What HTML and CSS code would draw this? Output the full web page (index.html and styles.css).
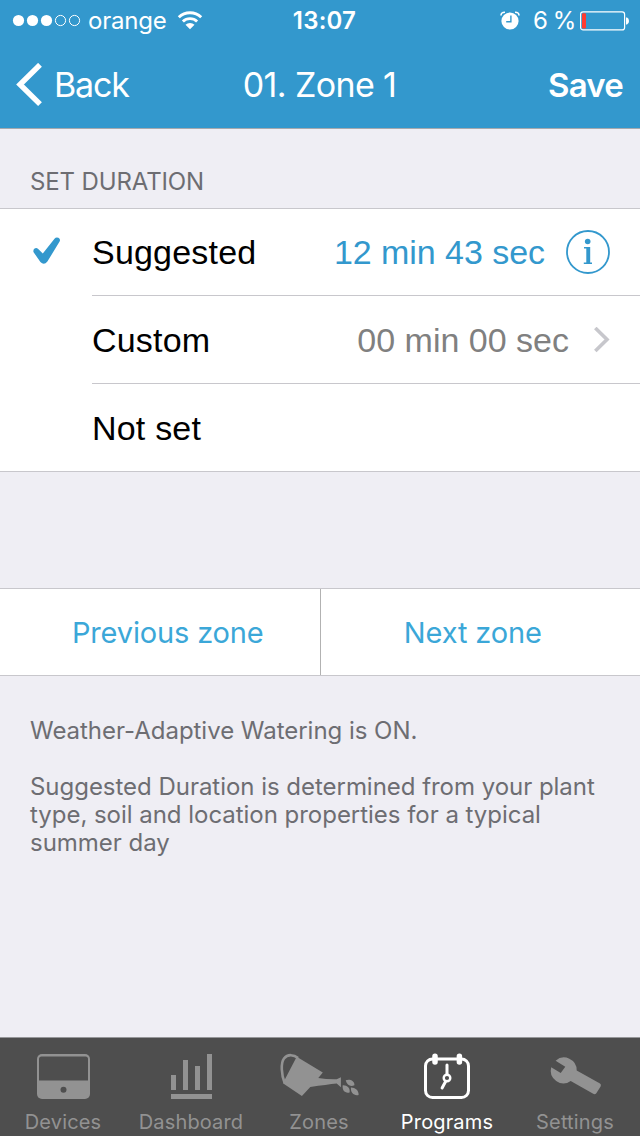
FILE: index.html
```html
<!DOCTYPE html>
<html lang="en">
<head>
<meta charset="utf-8">
<title>Zone duration</title>
<link rel="stylesheet" href="styles.css">
</head>
<body>
<div class="screen">
  <header class="header">
    <div class="status">
      <div class="status-left">
        <svg class="signal" width="70" height="14" viewBox="0 0 70 14"><g fill="#fff"><circle cx="6.500" cy="6.500" r="5.600"/><circle cx="20.500" cy="6.500" r="5.600"/><circle cx="34.500" cy="6.500" r="5.600"/></g><g fill="none" stroke="#fff" stroke-width="1"><circle cx="48.500" cy="6.500" r="5.100"/><circle cx="62.500" cy="6.500" r="5.100"/></g></svg>
        <span class="carrier">orange</span>
        <svg class="wifi" width="26" height="20" viewBox="0 0 26 20"><g fill="none" stroke="#fff" stroke-width="2.900"><path d="M1.800 6.300A16 16 0 0 1 24.200 6.300"/><path d="M5.900 10.500A10.300 10.300 0 0 1 20.100 10.500"/></g><path fill="#fff" d="M8.500 13.700A6.500 6.500 0 0 1 17.500 13.700L13 18.300Z"/></svg>
      </div>
      <div class="clock">13:07</div>
      <div class="status-right">
        <svg class="alarm" width="20" height="20" viewBox="0 0 20 20"><circle cx="10" cy="10" r="8.600" fill="#fff"/><path d="M1 4.600Q1 1.100 5 1.200M19 4.600Q19 1.100 15 1.200" fill="none" stroke="#fff" stroke-width="1.600"/><path d="M10.900 4.600v6.100H6.200" fill="none" stroke="#3398cd" stroke-width="1.400"/></svg>
        <span class="percent">6 %</span>
        <svg class="battery" width="50" height="20" viewBox="0 0 50 20"><rect x=".6" y=".9" width="44" height="18" rx="2.500" fill="none" stroke="#fff" stroke-width="1.200"/><rect x="2" y="2.300" width="4" height="15.200" rx="1" fill="#ff3b30"/><path fill="#fff" d="M46 6.500h1q2 .5 2 3.500t-2 3.500h-1z"/></svg>
      </div>
    </div>
    <nav class="nav">
      <div class="back">
        <svg class="chevron-left" width="26" height="44" viewBox="0 0 26 44"><path d="M24 1.800L4 21.500 24 41.200" fill="none" stroke="#fff" stroke-width="5.400"/></svg>
        <span class="back-label">Back</span>
      </div>
      <h1 class="title">01. Zone 1</h1>
      <div class="save">Save</div>
    </nav>
  </header>
  <main class="main">
    <h2 class="section-label">SET DURATION</h2>
    <ul class="list">
      <li class="row">
        <div class="mark"><svg class="check" width="28" height="28" viewBox="0 0 28 28"><path fill="#3398cd" d="M.6 15.200Q-.2 13 1.600 11.500 3.400 10.300 5.200 12L9.800 16.600 21.500 1.800Q23 -.2 25.400 .8 27.800 2 26.600 4.600L14.400 24.500Q11 28.700 7.400 25Z"/></svg></div>
        <div class="row-body"><span class="name suggested">Suggested</span><span class="value active">12 min 43 sec</span>
          <svg class="info" width="44" height="44" viewBox="0 0 44 44"><circle cx="22" cy="22" r="21" fill="none" stroke="#3398cd" stroke-width="1.800"/><g fill="#3398cd"><circle cx="21.700" cy="11.500" r="2.800"/><path d="M18 17h6.200v15.600H26V34h-8.200v-1.400h2.500V18.400H18z"/></g></svg>
        </div>
      </li>
      <li class="row">
        <div class="mark"></div>
        <div class="row-body"><span class="name custom">Custom</span><span class="value">00 min 00 sec</span>
          <svg class="chevron-right" width="18" height="26" viewBox="0 0 18 26"><path d="M3.300 1L15 12.500 3.300 24" fill="none" stroke="#c7c7cc" stroke-width="3.600"/></svg>
        </div>
      </li>
      <li class="row">
        <div class="mark"></div>
        <div class="row-body"><span class="name notset">Not set</span></div>
      </li>
    </ul>
    <div class="zone-buttons">
      <div class="zone-button previous">Previous zone</div>
      <div class="zone-button next">Next zone</div>
    </div>
    <div class="notes">
      <p class="note">Weather-Adaptive Watering is ON.</p>
      <p class="note"><span class="line">Suggested Duration is determined from your plant</span> <span class="line">type, soil and location properties for a typical</span> <span class="line">summer day</span></p>
    </div>
  </main>
  <footer class="tabs">
    <div class="tab">
      <svg class="icon" width="80" height="50" viewBox="0 0 80 50"><rect x="14" y="2" width="53" height="45" rx="5" fill="#929292"/><path d="M18.500 4.500h44a2.500 2.500 0 0 1 2.500 2.500v21.500h-49V7A2.500 2.500 0 0 1 18.500 4.500z" fill="#4e4e4e"/><circle cx="40.500" cy="37.700" r="3" fill="#4e4e4e"/></svg>
      <span class="tab-label devices">Devices</span>
    </div>
    <div class="tab">
      <svg class="icon" width="80" height="50" viewBox="0 0 80 50"><path fill="#929292" d="M20 23h5v15h-5zM32 8h5v30h-5zM44 14h5v24h-5zM56 2h5v36h-5zM20 42h41v5H20z"/></svg>
      <span class="tab-label dashboard">Dashboard</span>
    </div>
    <div class="tab">
      <svg class="icon" width="80" height="50" viewBox="0 0 80 50"><path d="M5.500 30.500C2.500 23 1.500 11 5 6.500C8.500 1.800 15 2.500 19 6" fill="none" stroke="#929292" stroke-width="2.600"/><path fill="#929292" d="M17.700 4.700L43.800 20.500 39.300 26Q48 27.500 57.700 27.300L61.900 25.300V35.300L57.700 31.500Q48 32.500 31.300 35L22.900 44 3.900 31.300Z"/><path fill="#929292" d="M66.700 28.300C70 26.500 76 28.500 75.400 33.300C71.500 34.800 68 33.500 66.700 28.300zM63.700 33.300C68 33 71.500 36 70.600 40.500C66 41.500 63 38.500 63.700 33.300zM71.900 35.600C76 35.500 80 38.500 79.600 43C75 44 71.500 41 71.900 35.600z"/></svg>
      <span class="tab-label zones">Zones</span>
    </div>
    <div class="tab selected">
      <svg class="icon" width="80" height="50" viewBox="0 0 80 50"><g fill="none" stroke="#fff" stroke-width="3" stroke-linecap="round"><rect x="18.500" y="7" width="43" height="38.500" rx="7"/><path d="M40 13V22.500M38.600 29.500l-3.500 6.500"/><circle cx="40" cy="26" r="3.300" stroke-width="2.400"/><path d="M28 4.300v5.700M52.400 4.300v5.700" stroke-width="5.500"/></g></svg>
      <span class="tab-label programs">Programs</span>
    </div>
    <div class="tab">
      <svg class="icon" width="80" height="50" viewBox="0 0 80 50"><path fill="#929292" d="M20.600 8.700A12.700 12.700 0 0 1 41.700 18.500L65 31.500Q66.600 32.700 65.600 34.500L61.300 41.300Q60 42.800 58.200 41.800L35.700 29A12.700 12.700 0 0 1 16.200 15.300L25.700 21 30.300 14.700Z"/></svg>
      <span class="tab-label settings">Settings</span>
    </div>
  </footer>
</div>
</body>
</html>
```
FILE: styles.css
```css
* { box-sizing: border-box; margin: 0; padding: 0; }
body { background: #efeef4; font-family: Inter, "Liberation Sans", sans-serif; }
svg { display: block; flex: none; }
.screen { width: 640px; height: 1136px; display: flex; flex-direction: column; background: #efeef4; overflow: hidden; }
.header { height: 129px; background: #3398cd; border-bottom: 1px solid #a5a9ae; color: #fff; white-space: nowrap; }
.status { height: 40px; display: grid; grid-template-columns: 1fr 80px 1fr; align-items: center; font-size: 24px; line-height: 40px; }
.status-left { display: flex; align-items: center; padding-left: 12px; }
.carrier { margin-left: 6px; width: 80px; padding-top: 1px; letter-spacing: -0.2px; }
.wifi { margin-left: 9px; }
.clock { text-align: center; font-weight: 600; padding-left: 9px; letter-spacing: 0.2px; }
.status-right { display: flex; align-items: center; justify-content: flex-end; padding-right: 10px; }
.percent { width: 45px; margin-left: 13px; margin-right: 2px; letter-spacing: -0.9px; padding-top: 1px; }
.nav { height: 88px; display: grid; grid-template-columns: 200px 1fr 200px; align-items: center; font-size: 34px; line-height: 88px; }
.back { display: flex; align-items: center; padding-left: 16px; }
.back-label { margin-left: 12px; letter-spacing: -1.2px; padding-top: 1px; }
.title { text-align: center; font-size: 34px; font-weight: 400; letter-spacing: -0.6px; padding: 1px 1px 0 0; }
.save { text-align: right; font-weight: 600; font-size: 33px; padding: 1px 17px 0 0; letter-spacing: -0.8px; }
.main { flex: 1; }
.section-label { height: 79px; padding: 39px 0 0 30px; font-size: 24px; line-height: 28px; font-weight: 400; color: #6d6d72; letter-spacing: -0.13px; }
.list { list-style: none; background: #fff; border-top: 1px solid #c8c7cc; border-bottom: 1px solid #c8c7cc; }
.row { display: flex; height: 88px; }
.row:first-child { height: 87px; }
.row:last-child { height: 87px; }
.mark { width: 92px; padding: 28px 0 0 33px; }
.row-body { flex: 1; display: flex; align-items: center; padding-right: 30px; border-bottom: 1px solid #c8c7cc; font-family: "Liberation Sans", sans-serif; font-size: 34px; color: #000; white-space: nowrap; }
.row:last-child .row-body { border-bottom: 0; }
.row + .row .name, .row + .row .value { padding-top: 2px; }
.name { letter-spacing: 0.2px; }
.value { margin-left: auto; color: #808080; }
.active { color: #3398cd; letter-spacing: -0.05px; }
.info { margin-left: 21px; }
.chevron-right { margin-left: 23px; }
.zone-buttons { display: flex; margin-top: 116px; height: 88px; background: #fff; border-top: 1px solid #c8c7cc; border-bottom: 1px solid #c8c7cc; }
.zone-button { width: 320px; text-align: center; font-size: 29px; line-height: 87px; color: #3ba7d8; letter-spacing: -0.15px; }
.previous { width: 321px; padding-left: 16px; border-right: 1px solid #b2b2b2; }
.next { padding-right: 15px; }
.notes { padding: 41px 0 0 30px; color: #6d6d72; font-size: 24px; line-height: 28px; white-space: nowrap; letter-spacing: -0.03px; }
.note + .note { margin-top: 28px; }
.line { display: block; }
.tabs { height: 99px; display: flex; background: #4e4e4e; border-top: 1px solid #97979a; color: #929292; }
.tab { width: 128px; display: flex; flex-direction: column; align-items: center; padding: 14px 2px 0 0; }
.tab-label { font-size: 20px; line-height: 24px; margin-top: 8px; white-space: nowrap; letter-spacing: 0.15px; }
.selected { color: #fff; }
```
